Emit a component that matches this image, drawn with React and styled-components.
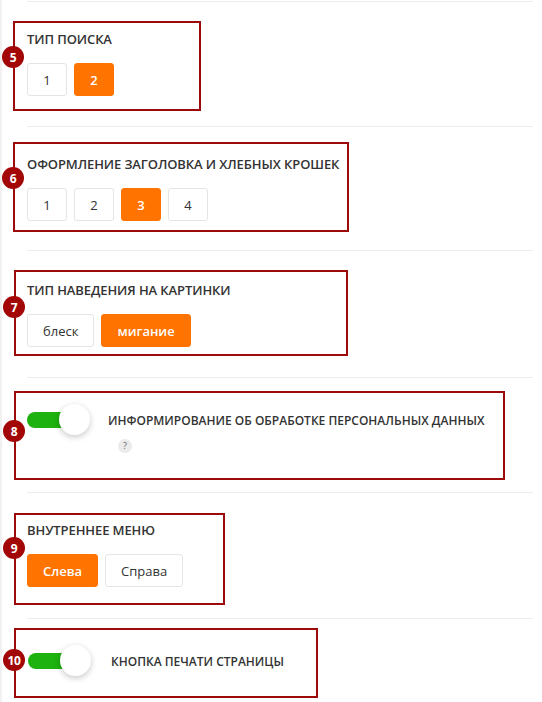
import React from "react";
import styled, { createGlobalStyle } from "styled-components";

const GlobalStyle = createGlobalStyle`
  html, body {
    margin: 0;
    padding: 0;
    background: #fff;
  }
  body {
    font-family: "Open Sans", "Noto Sans", sans-serif;
    color: #333;
  }
`;

const Page = styled.div`
  width: 540px;
  min-height: 702px;
  border-left: 2px solid #f1f1f1;
  padding-top: 1px;
  box-sizing: border-box;
`;

const Divider = styled.div`
  height: 1px;
  width: 506px;
  margin-left: 25px;
  margin-top: ${({ $mt }) => $mt || 0}px;
  background: #ececec;
`;

const Box = styled.div`
  position: relative;
  box-sizing: border-box;
  width: ${({ $w }) => $w}px;
  margin-left: ${({ $ml }) => $ml}px;
  margin-top: ${({ $mt }) => $mt}px;
  padding: ${({ $pt }) => $pt}px 10px ${({ $pb }) => $pb}px
    ${({ $pl }) => $pl}px;
  border: 2px solid #9c0a0a;
`;

const Badge = styled.span`
  position: absolute;
  left: -13px;
  top: ${({ $top }) => $top}px;
  width: 22px;
  height: 22px;
  border-radius: 50%;
  background: #a30606;
  color: #fff;
  font-size: 12px;
  font-weight: 700;
  display: flex;
  align-items: center;
  justify-content: center;
  letter-spacing: -0.3px;
`;

const Title = styled.div`
  font-size: ${({ $size }) => $size || 13}px;
  line-height: 18px;
  font-weight: 600;
  text-transform: uppercase;
  color: #333;
  white-space: nowrap;
  letter-spacing: ${({ $size }) => ($size ? 0 : -0.1)}px;
`;

const Options = styled.div`
  display: flex;
  gap: 7px;
  margin-top: 15px;
`;

const Option = styled.div`
  box-sizing: border-box;
  height: 33px;
  min-width: 40px;
  padding: 0 ${({ $wide }) => ($wide ? 15 : 0)}px;
  display: flex;
  align-items: center;
  justify-content: center;
  border-radius: 3px;
  font-size: 13px;
  border: 1px solid ${({ $active }) => ($active ? "#ff7400" : "#e4e4e4")};
  background: ${({ $active }) => ($active ? "#ff7400" : "#fff")};
  color: ${({ $active }) => ($active ? "#fff" : "#333")};
  font-weight: ${({ $active }) => ($active ? 600 : 400)};
`;

const ToggleRow = styled.div`
  display: flex;
  align-items: flex-start;
`;

const Toggle = styled.div`
  position: relative;
  width: 63px;
  height: 31px;
  flex-shrink: 0;
`;

const Track = styled.div`
  position: absolute;
  left: 0;
  top: 8px;
  width: 50px;
  height: 16px;
  border-radius: 8px;
  background: #1db20f;
`;

const Knob = styled.div`
  position: absolute;
  right: 0;
  top: 0;
  width: 31px;
  height: 31px;
  border-radius: 50%;
  background: #fff;
  box-shadow: 0 2px 6px rgba(0, 0, 0, 0.22);
`;

const ToggleText = styled.div`
  margin-left: ${({ $gap }) => $gap}px;
  margin-top: 8px;
`;

const Hint = styled.div`
  width: 14px;
  height: 14px;
  margin: 9px 0 0 10px;
  border-radius: 50%;
  background: #ebebeb;
  color: #666;
  font-size: 9px;
  line-height: 14px;
  text-align: center;
`;

function Choice({ num, title, options, active, wide, box }) {
  return (
    <Box {...box}>
      <Badge $top={box.$badge}>{num}</Badge>
      <Title>{title}</Title>
      <Options>
        {options.map((o, i) => (
          <Option key={o} $active={i === active} $wide={wide}>
            {o}
          </Option>
        ))}
      </Options>
    </Box>
  );
}

export default function App() {
  return (
    <>
      <GlobalStyle />
      <Page>
        <Divider />
        <Choice
          num="5"
          title="Тип поиска"
          options={["1", "2"]}
          active={1}
          box={{ $w: 188, $ml: 11, $mt: 19, $pt: 7, $pb: 13, $pl: 12, $badge: 23 }}
        />
        <Divider $mt={15} />
        <Choice
          num="6"
          title="Оформление заголовка и хлебных крошек"
          options={["1", "2", "3", "4"]}
          active={2}
          box={{ $w: 336, $ml: 11, $mt: 15, $pt: 11, $pb: 9, $pl: 12, $badge: 23 }}
        />
        <Divider $mt={18} />
        <Choice
          num="7"
          title="Тип наведения на картинки"
          options={["блеск", "мигание"]}
          active={1}
          wide
          box={{ $w: 334, $ml: 12, $mt: 19, $pt: 9, $pb: 7, $pl: 11, $badge: 24 }}
        />
        <Divider $mt={21} />
        <Box $w={491} $ml={12} $mt={13} $pt={11} $pb={25} $pl={11}>
          <Badge $top={27}>8</Badge>
          <ToggleRow>
            <Toggle>
              <Track />
              <Knob />
            </Toggle>
            <ToggleText $gap={18}>
              <Title $size={12}>
                Информирование об обработке персональных данных
              </Title>
              <Hint>?</Hint>
            </ToggleText>
          </ToggleRow>
        </Box>
        <Divider $mt={12} />
        <Choice
          num="9"
          title="Внутреннее меню"
          options={["Слева", "Справа"]}
          active={0}
          wide
          box={{ $w: 211, $ml: 12, $mt: 20, $pt: 6, $pb: 16, $pl: 11, $badge: 22 }}
        />
        <Divider $mt={13} />
        <Box $w={304} $ml={12} $mt={9} $pt={15} $pb={20} $pl={12}>
          <Badge $top={19}>10</Badge>
          <ToggleRow>
            <Toggle>
              <Track />
              <Knob />
            </Toggle>
            <ToggleText $gap={20}>
              <Title $size={12}>Кнопка печати страницы</Title>
            </ToggleText>
          </ToggleRow>
        </Box>
      </Page>
    </>
  );
}
